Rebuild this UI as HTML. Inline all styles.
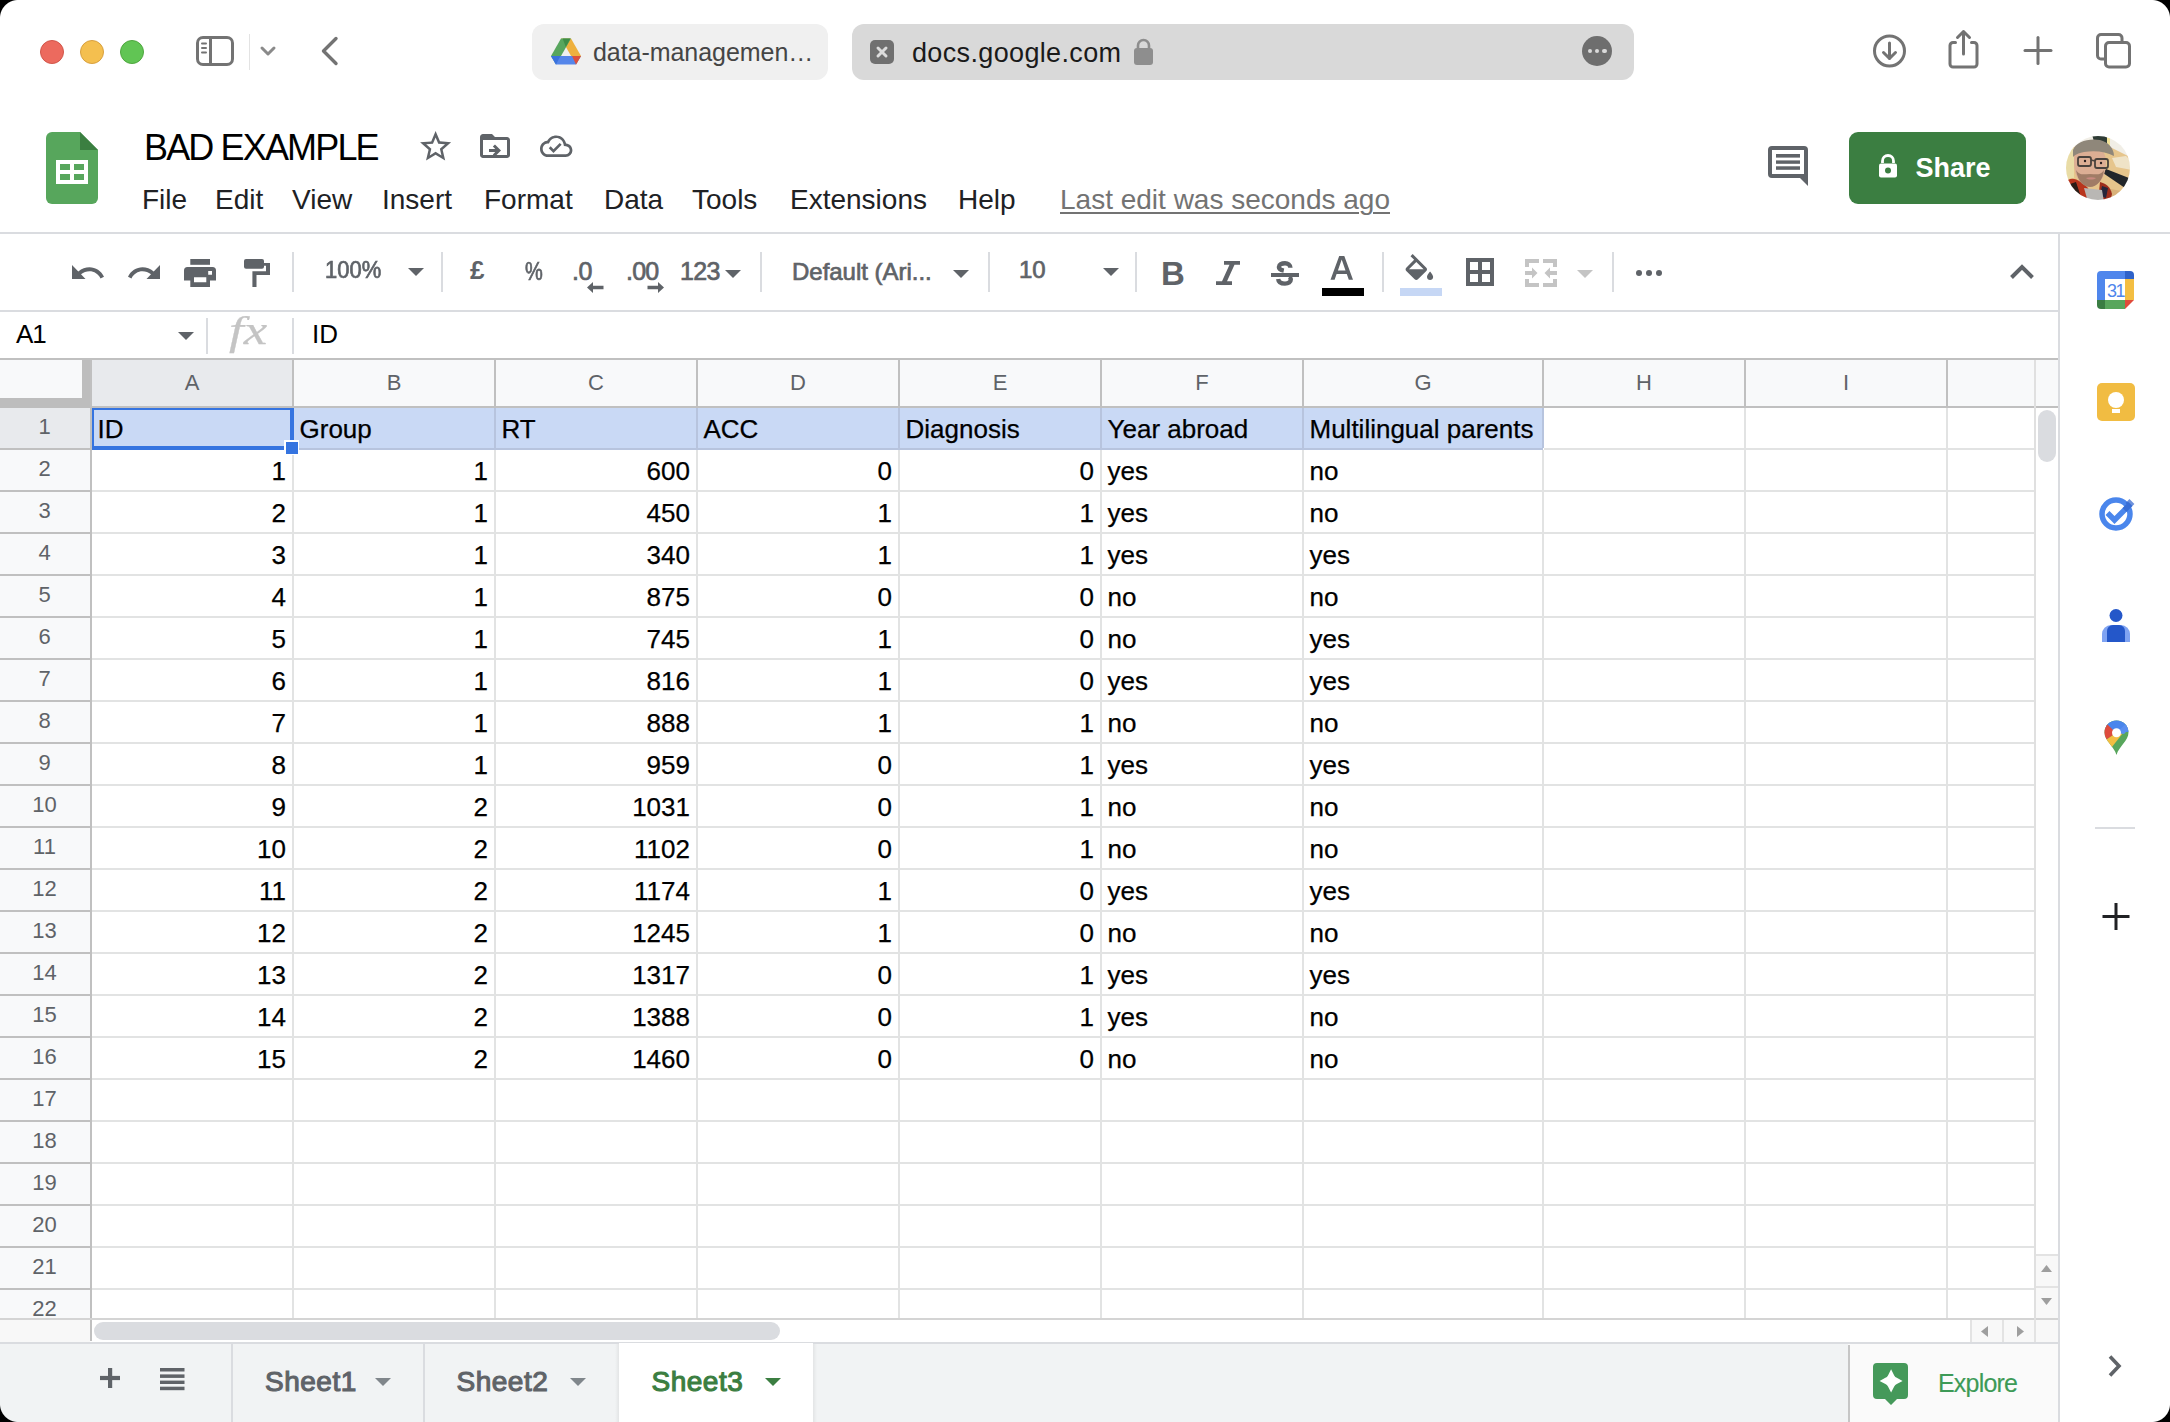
<!DOCTYPE html>
<html><head><meta charset="utf-8"><style>
html,body{margin:0;padding:0;}
body{width:2170px;height:1422px;overflow:hidden;position:relative;background:#fff;font-family:"Liberation Sans", sans-serif;}
</style></head><body>
<div style="position:absolute;left:40px;top:40px;width:24px;height:24px;border-radius:50%;background:#ec6a5e;box-sizing:border-box;border:1px solid #d1564a;"></div><div style="position:absolute;left:80px;top:40px;width:24px;height:24px;border-radius:50%;background:#f4bf4f;box-sizing:border-box;border:1px solid #d8a03f;"></div><div style="position:absolute;left:120px;top:40px;width:24px;height:24px;border-radius:50%;background:#61c554;box-sizing:border-box;border:1px solid #4fa73f;"></div><svg style="position:absolute;left:190px;top:30px;" width="50" height="42" viewBox="0 0 50 42"><rect x="7.5" y="7.5" width="35" height="27" rx="5.5" fill="none" stroke="#737373" stroke-width="3"/><line x1="20.5" y1="8" x2="20.5" y2="34" stroke="#737373" stroke-width="3"/><g stroke="#737373" stroke-width="2" stroke-linecap="round"><line x1="12" y1="13.5" x2="16" y2="13.5"/><line x1="12" y1="18" x2="16" y2="18"/><line x1="12" y1="22.5" x2="16" y2="22.5"/></g></svg><div style="position:absolute;left:249px;top:34px;width:1px;height:36px;background:#e3e3e3"></div><svg style="position:absolute;left:256px;top:40px;" width="24" height="20" viewBox="0 0 24 20"><polyline points="6,8 12,14 18,8" fill="none" stroke="#8a8a8a" stroke-width="3" stroke-linecap="round" stroke-linejoin="round"/></svg><svg style="position:absolute;left:314px;top:32px;" width="30" height="38" viewBox="0 0 30 38"><polyline points="22,6.5 9.5,19 22,31.5" fill="none" stroke="#737373" stroke-width="3.4" stroke-linecap="round" stroke-linejoin="round"/></svg><div style="position:absolute;left:532px;top:24px;width:296px;height:56px;background:#f0f0f0;border-radius:12px"></div><svg style="position:absolute;left:551px;top:38px;" width="30" height="27" viewBox="0 0 30 27">
<path d="M10 0.6 L20 0.6 L30 18 L25 26.6 Z" fill="#eeb03e"/>
<path d="M10 0.6 L20 0.6 L10 18 L5 26.6 L0 18 Z" fill="#58a65e"/>
<path d="M0 18 L30 18 L25 26.6 L5 26.6 Z" fill="#5586ea"/>
<path d="M11.6 0.6 L19.4 0.6 L14.8 9 Z" fill="#3e8d47"/>
<path d="M30 18 L25 26.6 L21 18 Z" fill="#de4f3a"/>
<path d="M0 18 L5 26.6 L9.5 18 Z" fill="#3a72de"/>
</svg><div style="position:absolute;left:593px;top:37.96px;font-size:25px;line-height:28.75px;color:#454545;font-weight:400;white-space:nowrap;letter-spacing:-0.05px">data-managemen&#8230;</div><div style="position:absolute;left:852px;top:24px;width:782px;height:56px;background:#d9d9d9;border-radius:12px"></div><div style="position:absolute;left:870px;top:40px;width:24px;height:24px;background:#707070;border-radius:5px"></div><svg style="position:absolute;left:870px;top:40px;" width="24" height="24" viewBox="0 0 24 24"><g stroke="#dcdcdc" stroke-width="3" stroke-linecap="round"><line x1="8" y1="8" x2="16" y2="16"/><line x1="16" y1="8" x2="8" y2="16"/></g></svg><div style="position:absolute;left:912px;top:37.55px;font-size:27px;line-height:31.05px;color:#1a1a1a;font-weight:400;white-space:nowrap;letter-spacing:0.35px">docs.google.com</div><svg style="position:absolute;left:1133px;top:37px;" width="21" height="29" viewBox="0 0 21 29"><path d="M5 12 V8.5 A5.5 5.5 0 0 1 16 8.5 V12" fill="none" stroke="#8e8e8e" stroke-width="2.6"/><rect x="1" y="11" width="19" height="17" rx="3" fill="#8e8e8e"/></svg><div style="position:absolute;left:1582px;top:36px;width:30px;height:30px;border-radius:50%;background:#6e6e6e"></div><div style="position:absolute;left:1587.7px;top:48.5px;width:4.6px;height:4.6px;border-radius:50%;background:#dadada"></div><div style="position:absolute;left:1594.7px;top:48.5px;width:4.6px;height:4.6px;border-radius:50%;background:#dadada"></div><div style="position:absolute;left:1602.2px;top:48.5px;width:4.6px;height:4.6px;border-radius:50%;background:#dadada"></div><svg style="position:absolute;left:1870px;top:32px;" width="40" height="40" viewBox="0 0 40 40"><circle cx="19.5" cy="19" r="15" fill="none" stroke="#737373" stroke-width="3"/><line x1="19.5" y1="11" x2="19.5" y2="26" stroke="#737373" stroke-width="3" stroke-linecap="round"/><polyline points="13.5,20.5 19.5,26.5 25.5,20.5" fill="none" stroke="#737373" stroke-width="3" stroke-linecap="round" stroke-linejoin="round"/></svg><svg style="position:absolute;left:1945px;top:26px;" width="40" height="46" viewBox="0 0 40 46"><path d="M10.5 16.5 H8 a3 3 0 0 0 -3 3 V38 a3 3 0 0 0 3 3 H29 a3 3 0 0 0 3 -3 V19.5 a3 3 0 0 0 -3 -3 H26.5" fill="none" stroke="#737373" stroke-width="3" stroke-linecap="round"/><line x1="18.5" y1="6" x2="18.5" y2="28" stroke="#737373" stroke-width="3" stroke-linecap="round"/><polyline points="12.5,11.5 18.5,5.5 24.5,11.5" fill="none" stroke="#737373" stroke-width="3" stroke-linecap="round" stroke-linejoin="round"/></svg><svg style="position:absolute;left:2020px;top:33px;" width="36" height="36" viewBox="0 0 36 36"><g stroke="#737373" stroke-width="3" stroke-linecap="round"><line x1="18" y1="4.5" x2="18" y2="30.5"/><line x1="5" y1="17.5" x2="31" y2="17.5"/></g></svg><svg style="position:absolute;left:2090px;top:28px;" width="46" height="46" viewBox="0 0 46 46"><path d="M15.5 31 H11 a3.5 3.5 0 0 1 -3.5 -3.5 V10 a3.5 3.5 0 0 1 3.5 -3.5 H28.5 a3.5 3.5 0 0 1 3.5 3.5 V14.5" fill="none" stroke="#737373" stroke-width="3"/><rect x="15.5" y="14.5" width="24" height="24.5" rx="3.5" fill="none" stroke="#737373" stroke-width="3"/></svg><svg style="position:absolute;left:46px;top:132px;" width="52" height="72" viewBox="0 0 52 72">
<path d="M6 0 H34 L52 18 V66 a6 6 0 0 1 -6 6 H6 a6 6 0 0 1 -6 -6 V6 a6 6 0 0 1 6 -6 Z" fill="#57a65c"/>
<path d="M34 0 L52 18 H34 Z" fill="#3b7f41"/>
<rect x="10" y="28" width="32" height="24" fill="#fff"/>
<rect x="14" y="32" width="10" height="6" fill="#57a65c"/>
<rect x="28" y="32" width="10" height="6" fill="#57a65c"/>
<rect x="14" y="42" width="10" height="6" fill="#57a65c"/>
<rect x="28" y="42" width="10" height="6" fill="#57a65c"/>
</svg><div style="position:absolute;left:144px;top:126.90px;font-size:36px;line-height:41.40px;color:#000;font-weight:400;white-space:nowrap;letter-spacing:-1.85px">BAD EXAMPLE</div><svg style="position:absolute;left:417px;top:127.7px;" width="38" height="38" viewBox="0 0 38 38"><g transform="scale(1.55)"><path fill="#5f6368" d="M22 9.24l-7.19-.62L12 2 9.19 8.63 2 9.24l5.46 4.73L5.82 21 12 17.27 18.18 21l-1.63-7.03L22 9.24zM12 15.4l-3.76 2.27 1-4.28-3.32-2.88 4.38-.38L12 6.1l1.71 4.04 4.38.38-3.32 2.88 1 4.28L12 15.4z"/></g></svg><svg style="position:absolute;left:477px;top:128px;" width="36" height="36" viewBox="0 0 36 36"><g transform="scale(1.5)"><path fill="#5f6368" d="M20 6h-8l-2-2H4c-1.1 0-1.99.9-1.99 2L2 18c0 1.1.9 2 2 2h16c1.1 0 2-.9 2-2V8c0-1.1-.9-2-2-2zm0 12H4V8h16v10zm-7.84-4H8v2h4.16l-1.59 1.59L11.99 19 16 15.01 11.99 11l-1.41 1.41L12.16 14z"/></g></svg><svg style="position:absolute;left:540px;top:129.9px;" width="34" height="30" viewBox="0 0 34 30"><g transform="scale(1.35)"><path fill="#5f6368" d="M19.35 10.04C18.67 6.59 15.64 4 12 4 9.11 4 6.6 5.64 5.35 8.04 2.34 8.36 0 10.91 0 14c0 3.31 2.69 6 6 6h13c2.76 0 5-2.24 5-5 0-2.64-2.05-4.78-4.65-4.96zM19 18H6c-2.21 0-4-1.79-4-4 0-2.05 1.53-3.76 3.56-3.97l1.07-.11.5-.95C8.08 7.14 9.94 6 12 6c2.62 0 4.88 1.86 5.39 4.43l.3 1.5 1.53.11c1.56.1 2.78 1.41 2.78 2.96 0 1.65-1.35 3-3 3zm-9-3.82l-2.09-2.09L6.5 13.5 10 17l6.01-6.01-1.41-1.41z"/></g></svg><div style="position:absolute;left:142px;top:184.45px;font-size:28px;line-height:32.20px;color:#202124;font-weight:400;white-space:nowrap;">File</div><div style="position:absolute;left:215px;top:184.45px;font-size:28px;line-height:32.20px;color:#202124;font-weight:400;white-space:nowrap;">Edit</div><div style="position:absolute;left:292px;top:184.45px;font-size:28px;line-height:32.20px;color:#202124;font-weight:400;white-space:nowrap;">View</div><div style="position:absolute;left:382px;top:184.45px;font-size:28px;line-height:32.20px;color:#202124;font-weight:400;white-space:nowrap;">Insert</div><div style="position:absolute;left:484px;top:184.45px;font-size:28px;line-height:32.20px;color:#202124;font-weight:400;white-space:nowrap;">Format</div><div style="position:absolute;left:604px;top:184.45px;font-size:28px;line-height:32.20px;color:#202124;font-weight:400;white-space:nowrap;">Data</div><div style="position:absolute;left:692px;top:184.45px;font-size:28px;line-height:32.20px;color:#202124;font-weight:400;white-space:nowrap;">Tools</div><div style="position:absolute;left:790px;top:184.45px;font-size:28px;line-height:32.20px;color:#202124;font-weight:400;white-space:nowrap;">Extensions</div><div style="position:absolute;left:958px;top:184.45px;font-size:28px;line-height:32.20px;color:#202124;font-weight:400;white-space:nowrap;">Help</div><div style="position:absolute;left:1060px;top:184.45px;font-size:28px;line-height:32.20px;color:#737373;font-weight:400;white-space:nowrap;text-decoration:underline;text-decoration-thickness:2px;text-underline-offset:3px">Last edit was seconds ago</div><svg style="position:absolute;left:1764px;top:140px;" width="48" height="50" viewBox="0 0 48 50"><path d="M8 6 H40 a4 4 0 0 1 4 4 V46 L36 38 H8 a4 4 0 0 1 -4 -4 V10 a4 4 0 0 1 4 -4 Z M8 10 V34 H40 V10 Z" fill="#5f6368" fill-rule="evenodd"/><rect x="12" y="14" width="24" height="3.6" fill="#5f6368"/><rect x="12" y="20.4" width="24" height="3.4" fill="#5f6368"/><rect x="12" y="26.3" width="24" height="3.5" fill="#5f6368"/></svg><div style="position:absolute;left:1849px;top:132px;width:177px;height:72px;background:#3b7e41;border-radius:9px"></div><svg style="position:absolute;left:1876px;top:154px;" width="24" height="26" viewBox="0 0 24 26"><path d="M6.5 9 V7 a5.5 5.5 0 0 1 11 0 V9" fill="none" stroke="#fff" stroke-width="2.8"/><rect x="3" y="9.5" width="18" height="14" rx="2" fill="#fff"/><circle cx="12" cy="16.5" r="3" fill="#3b7e41"/></svg><div style="position:absolute;left:1915.5px;top:152.55px;font-size:27px;line-height:31.05px;color:#fff;font-weight:700;white-space:nowrap;">Share</div><svg style="position:absolute;left:2066px;top:136px;" width="64" height="64" viewBox="0 0 64 64">
<defs><clipPath id="av"><circle cx="32" cy="32" r="32"/></clipPath><filter id="avb" x="-10%" y="-10%" width="120%" height="120%"><feGaussianBlur stdDeviation="0.7"/></filter></defs>
<g clip-path="url(#av)"><g filter="url(#avb)">
<rect x="-2" y="-2" width="68" height="68" fill="#e6c58c"/>
<path d="M-2 -2 H66 V22 L30 4 L-2 14 Z" fill="#f1eee6"/>
<path d="M26 -2 H42 V9 L28 6 Z" fill="#2e3a34"/>
<path d="M41 -2 L44 -2 L44 10 L41 9 Z" fill="#f3e39a"/>
<path d="M46 22 L60 20 L66 26 V34 L50 31 Z" fill="#efe3c7"/>
<path d="M-2 14 L8 12 L8 42 L-2 44 Z" fill="#e9dca6"/>
<path d="M37 37 L40 33 L63 42 L59 52 Z" fill="#24262a"/>
<path d="M40 52 L60 56 L50 66 L40 66 Z" fill="#d9b27a"/>
<path d="M2 44 C8 40 16 46 22 52 L28 66 H-2 V50 Z" fill="#b8361f"/>
<path d="M4 48 L10 46 L14 58 L8 62 Z" fill="#2a1a18"/>
<path d="M34 46 C40 48 44 50 46 58 L44 66 H32 Z" fill="#9e2f1e"/>
<path d="M36 50 L42 52 L40 62 L34 60 Z" fill="#25253a"/>
<path d="M18 52 L36 54 L38 66 H22 Z" fill="#b9b7b4"/>
<path d="M8 22 C8 14 14 10 24 10 C34 10 40 16 40 26 C40 40 34 50 24 50 C14 50 8 40 8 26 Z" fill="#dcae94"/>
<path d="M10 34 C12 46 18 51 24 51 C31 51 37 44 38 34 C34 40 30 38 24 38 C18 38 14 40 10 34 Z" fill="#a07c66"/>
<path d="M20 42 C23 41 27 41 30 42 C28 44 22 44 20 42 Z" fill="#c98a80"/>
<path d="M7 14 C10 6 22 2 34 4 C42 6 48 12 48 20 C40 16 30 14 18 16 C12 17 9 19 7 21 Z" fill="#8f877a"/>
<g fill="none" stroke="#4a433c" stroke-width="1.8"><rect x="12" y="21" width="13" height="9" rx="2"/><rect x="29" y="23" width="13" height="9" rx="2"/><path d="M25 24 L29 25"/></g>
<circle cx="19" cy="25" r="1.2" fill="#2a2020"/><circle cx="35" cy="27" r="1.2" fill="#2a2020"/>
</g></g></svg><div style="position:absolute;left:0px;top:232px;width:2170px;height:2px;background:#dadce0"></div><svg style="position:absolute;left:66px;top:252px;" width="44" height="40" viewBox="0 0 44 40"><path d="M6 13 L6 27 L19.5 27 L15 22.3 C17.6 20.2 20.3 19.3 23.5 19.3 C28 19.3 32.5 22 34.5 26.5 L38 24.7 C35.5 19 29.5 15.2 23.5 15.2 C19.5 15.2 15.8 16.6 12.3 19.4 Z" fill="#5f6368"/></svg><svg style="position:absolute;left:122px;top:252px;" width="44" height="40" viewBox="0 0 44 40"><g transform="translate(44,0) scale(-1,1)"><path d="M6 13 L6 27 L19.5 27 L15 22.3 C17.6 20.2 20.3 19.3 23.5 19.3 C28 19.3 32.5 22 34.5 26.5 L38 24.7 C35.5 19 29.5 15.2 23.5 15.2 C19.5 15.2 15.8 16.6 12.3 19.4 Z" fill="#5f6368"/></g></svg><svg style="position:absolute;left:184px;top:259px;" width="32" height="28" viewBox="0 0 32 28"><rect x="6.3" y="0" width="19.7" height="5.8" fill="#5f6368"/><path d="M3.5 8 H28.5 a3.5 3.5 0 0 1 3.5 3.5 V21.6 H26 V28 H6.3 V21.6 H0 V11.5 A3.5 3.5 0 0 1 3.5 8 Z M10 18.2 V23.3 H22.3 V18.2 Z M24.2 12 V15.8 H28 V12 Z" fill="#5f6368" fill-rule="evenodd"/></svg><svg style="position:absolute;left:244px;top:259px;" width="27" height="28" viewBox="0 0 27 28"><rect x="0" y="0" width="20" height="9.8" rx="2" fill="#5f6368"/><path d="M20 4 H26 V16 H12.5 V28 H8.4 V12.2 H22 V6.8 H20 Z" fill="#5f6368"/></svg><div style="position:absolute;left:292px;top:252px;width:2px;height:40px;background:#dadce0"></div><div style="position:absolute;left:325px;top:256.27px;font-size:24px;line-height:27.60px;color:#5f6368;font-weight:400;white-space:nowrap;-webkit-text-stroke:0.7px #5f6368;transform:scaleX(0.915);transform-origin:0 0">100%</div><svg style="position:absolute;left:408px;top:268px;" width="16" height="8" viewBox="0 0 16 8"><polygon points="0,0 16,0 8.0,8" fill="#5f6368"/></svg><div style="position:absolute;left:441px;top:252px;width:2px;height:40px;background:#dadce0"></div><div style="position:absolute;left:470px;top:256.16px;font-size:26px;line-height:29.90px;color:#5f6368;font-weight:700;white-space:nowrap;">£</div><div style="position:absolute;left:524.5px;top:257.06px;font-size:25px;line-height:28.75px;color:#5f6368;font-weight:400;white-space:nowrap;-webkit-text-stroke:0.7px #5f6368;transform:scaleX(0.8);transform-origin:0 0">%</div><div style="position:absolute;left:572px;top:257.06px;font-size:25px;line-height:28.75px;color:#5f6368;font-weight:400;white-space:nowrap;-webkit-text-stroke:0.7px #5f6368;letter-spacing:-0.5px">.0</div><svg style="position:absolute;left:587px;top:282px;" width="18" height="12" viewBox="0 0 18 12"><path d="M0 5.5 L6 0 V3.7 H16.5 V7.3 H6 V11 Z" fill="#5f6368"/></svg><div style="position:absolute;left:626px;top:257.06px;font-size:25px;line-height:28.75px;color:#5f6368;font-weight:400;white-space:nowrap;-webkit-text-stroke:0.7px #5f6368;letter-spacing:-0.8px">.00</div><svg style="position:absolute;left:647px;top:282px;" width="18" height="12" viewBox="0 0 18 12"><path d="M17 5.5 L11 0 V3.7 H0.5 V7.3 H11 V11 Z" fill="#5f6368"/></svg><div style="position:absolute;left:680px;top:257.36px;font-size:25px;line-height:28.75px;color:#5f6368;font-weight:400;white-space:nowrap;-webkit-text-stroke:0.7px #5f6368;letter-spacing:-0.6px">123</div><svg style="position:absolute;left:725px;top:270px;" width="16" height="8" viewBox="0 0 16 8"><polygon points="0,0 16,0 8.0,8" fill="#5f6368"/></svg><div style="position:absolute;left:760px;top:252px;width:2px;height:40px;background:#dadce0"></div><div style="position:absolute;left:792px;top:258.27px;font-size:24px;line-height:27.60px;color:#5f6368;font-weight:400;white-space:nowrap;-webkit-text-stroke:0.7px #5f6368;letter-spacing:-0.02px">Default (Ari...</div><svg style="position:absolute;left:953px;top:270px;" width="16" height="8" viewBox="0 0 16 8"><polygon points="0,0 16,0 8.0,8" fill="#5f6368"/></svg><div style="position:absolute;left:988px;top:252px;width:2px;height:40px;background:#dadce0"></div><div style="position:absolute;left:1019px;top:255.87px;font-size:24px;line-height:27.60px;color:#5f6368;font-weight:400;white-space:nowrap;-webkit-text-stroke:0.7px #5f6368">10</div><svg style="position:absolute;left:1103px;top:268px;" width="16" height="8" viewBox="0 0 16 8"><polygon points="0,0 16,0 8.0,8" fill="#5f6368"/></svg><div style="position:absolute;left:1135px;top:252px;width:2px;height:40px;background:#dadce0"></div><div style="position:absolute;left:1161px;top:255.12px;font-size:33px;line-height:37.95px;color:#5f6368;font-weight:700;white-space:nowrap;">B</div><svg style="position:absolute;left:1216px;top:261px;" width="26" height="24" viewBox="0 0 26 24"><path d="M8 0 H24 V3.8 H18.5 L11 20.2 H16 V24 H0 V20.2 H6 L13.5 3.8 H8 Z" fill="#5f6368"/></svg><svg style="position:absolute;left:1270px;top:258px;" width="30" height="30" viewBox="0 0 30 30"><g fill="none" stroke="#5f6368" stroke-width="4.4"><path d="M20.4 9.8 C20.3 6.8 18 5.2 15 5.2 C11.6 5.2 8.9 6.6 8.9 9 C8.9 11 10.6 12 13.8 12.6"/><path d="M8.2 21 C8.5 24.2 11.3 25.6 15 25.6 C18.6 25.6 20.8 24 20.8 21.6 C20.8 20.5 20.2 19.6 19 19"/></g><rect x="1" y="15" width="28" height="4" fill="#5f6368"/></svg><svg style="position:absolute;left:1330px;top:255px;" width="24" height="26" viewBox="0 0 24 26"><path d="M9.2 1 H14.3 L23 24.8 H18.8 L16.8 19 H6.6 L4.6 24.8 H0.5 Z M7.9 15.4 H15.5 L11.7 4.6 Z" fill="#5f6368"/></svg><div style="position:absolute;left:1322px;top:288px;width:42px;height:8px;background:#000"></div><div style="position:absolute;left:1382px;top:252px;width:2px;height:40px;background:#dadce0"></div><svg style="position:absolute;left:1401px;top:254px;" width="36" height="28" viewBox="0 0 36 28"><g transform="scale(1.53)"><path fill="#5f6368" d="M16.56 8.94L7.62 0 6.21 1.41l2.38 2.38-5.15 5.15c-.59.59-.59 1.54 0 2.12l5.5 5.5c.29.29.68.44 1.06.44s.77-.15 1.06-.44l5.5-5.5c.59-.58.59-1.530 0-2.12zM5.21 10L10 5.21 14.79 10H5.21zM19 11.5s-2 2.17-2 3.5c0 1.1.9 2 2 2s2-.9 2-2c0-1.330-2-3.5-2-3.5z"/></g></svg><div style="position:absolute;left:1400px;top:288px;width:42px;height:8px;background:#c6d7f5"></div><svg style="position:absolute;left:1466px;top:258px;" width="28" height="28" viewBox="0 0 28 28"><path d="M0 0 H28 V28 H0 Z M4 4 V12 H12 V4 Z M16 4 V12 H24 V4 Z M4 16 V24 H12 V16 Z M16 16 V24 H24 V16 Z" fill="#5f6368" fill-rule="evenodd"/></svg><svg style="position:absolute;left:1525px;top:259px;" width="32" height="28" viewBox="0 0 32 28"><path d="M0 0 H14 V4 H4 V8 H0 Z M18 0 H32 V8 H28 V4 H18 Z M0 20 H4 V24 H14 V28 H0 Z M28 20 H32 V28 H18 V24 H28 Z" fill="#c4c4c4"/><path d="M0 12 H7 V8.5 L12.5 14 L7 19.5 V16 H0 Z" fill="#c4c4c4"/><path d="M32 12 H25 V8.5 L19.5 14 L25 19.5 V16 H32 Z" fill="#c4c4c4"/></svg><svg style="position:absolute;left:1577px;top:270px;" width="16" height="8" viewBox="0 0 16 8"><polygon points="0,0 16,0 8.0,8" fill="#c4c4c4"/></svg><div style="position:absolute;left:1612px;top:252px;width:2px;height:40px;background:#dadce0"></div><div style="position:absolute;left:1636px;top:270px;width:6px;height:6px;border-radius:50%;background:#5f6368"></div><div style="position:absolute;left:1646px;top:270px;width:6px;height:6px;border-radius:50%;background:#5f6368"></div><div style="position:absolute;left:1656px;top:270px;width:6px;height:6px;border-radius:50%;background:#5f6368"></div><svg style="position:absolute;left:2006px;top:260px;" width="32" height="24" viewBox="0 0 32 24"><polyline points="5.5,17.5 16,7 26.5,17.5" fill="none" stroke="#5f6368" stroke-width="4"/></svg><div style="position:absolute;left:0px;top:310px;width:2058px;height:2px;background:#dadce0"></div><div style="position:absolute;left:16px;top:320.46px;font-size:26px;line-height:29.90px;color:#000;font-weight:400;white-space:nowrap;letter-spacing:-1.2px">A1</div><svg style="position:absolute;left:178px;top:332px;" width="16" height="8" viewBox="0 0 16 8"><polygon points="0,0 16,0 8.0,8" fill="#5f6368"/></svg><div style="position:absolute;left:206px;top:318px;width:2px;height:36px;background:#dadce0"></div><div style="position:absolute;left:229px;top:307.78px;font-size:40px;line-height:46.00px;color:#c4c4c4;font-weight:400;white-space:nowrap;font-family:'Liberation Serif', serif;letter-spacing:0px;transform:scaleX(1.32);transform-origin:0 0;-webkit-text-stroke:0.25px #c4c4c4"><i>fx</i></div><div style="position:absolute;left:292px;top:318px;width:2px;height:36px;background:#dadce0"></div><div style="position:absolute;left:312px;top:320.46px;font-size:26px;line-height:29.90px;color:#000;font-weight:400;white-space:nowrap;">ID</div><div style="position:absolute;left:92px;top:408px;width:1942px;height:910px;background:#fff"></div><div style="position:absolute;left:92px;top:408px;width:1451px;height:40px;background:#c9d9f5"></div><div style="position:absolute;left:92px;top:448px;width:1451px;height:2px;background:#b7c4de"></div><div style="position:absolute;left:1544px;top:448px;width:490px;height:2px;background:#e2e3e3"></div><div style="position:absolute;left:92px;top:490px;width:1942px;height:2px;background:#e2e3e3"></div><div style="position:absolute;left:92px;top:532px;width:1942px;height:2px;background:#e2e3e3"></div><div style="position:absolute;left:92px;top:574px;width:1942px;height:2px;background:#e2e3e3"></div><div style="position:absolute;left:92px;top:616px;width:1942px;height:2px;background:#e2e3e3"></div><div style="position:absolute;left:92px;top:658px;width:1942px;height:2px;background:#e2e3e3"></div><div style="position:absolute;left:92px;top:700px;width:1942px;height:2px;background:#e2e3e3"></div><div style="position:absolute;left:92px;top:742px;width:1942px;height:2px;background:#e2e3e3"></div><div style="position:absolute;left:92px;top:784px;width:1942px;height:2px;background:#e2e3e3"></div><div style="position:absolute;left:92px;top:826px;width:1942px;height:2px;background:#e2e3e3"></div><div style="position:absolute;left:92px;top:868px;width:1942px;height:2px;background:#e2e3e3"></div><div style="position:absolute;left:92px;top:910px;width:1942px;height:2px;background:#e2e3e3"></div><div style="position:absolute;left:92px;top:952px;width:1942px;height:2px;background:#e2e3e3"></div><div style="position:absolute;left:92px;top:994px;width:1942px;height:2px;background:#e2e3e3"></div><div style="position:absolute;left:92px;top:1036px;width:1942px;height:2px;background:#e2e3e3"></div><div style="position:absolute;left:92px;top:1078px;width:1942px;height:2px;background:#e2e3e3"></div><div style="position:absolute;left:92px;top:1120px;width:1942px;height:2px;background:#e2e3e3"></div><div style="position:absolute;left:92px;top:1162px;width:1942px;height:2px;background:#e2e3e3"></div><div style="position:absolute;left:92px;top:1204px;width:1942px;height:2px;background:#e2e3e3"></div><div style="position:absolute;left:92px;top:1246px;width:1942px;height:2px;background:#e2e3e3"></div><div style="position:absolute;left:92px;top:1288px;width:1942px;height:2px;background:#e2e3e3"></div><div style="position:absolute;left:292px;top:408px;width:2px;height:40px;background:#b7c4de"></div><div style="position:absolute;left:292px;top:450px;width:2px;height:868px;background:#e2e3e3"></div><div style="position:absolute;left:494px;top:408px;width:2px;height:40px;background:#b7c4de"></div><div style="position:absolute;left:494px;top:450px;width:2px;height:868px;background:#e2e3e3"></div><div style="position:absolute;left:696px;top:408px;width:2px;height:40px;background:#b7c4de"></div><div style="position:absolute;left:696px;top:450px;width:2px;height:868px;background:#e2e3e3"></div><div style="position:absolute;left:898px;top:408px;width:2px;height:40px;background:#b7c4de"></div><div style="position:absolute;left:898px;top:450px;width:2px;height:868px;background:#e2e3e3"></div><div style="position:absolute;left:1100px;top:408px;width:2px;height:40px;background:#b7c4de"></div><div style="position:absolute;left:1100px;top:450px;width:2px;height:868px;background:#e2e3e3"></div><div style="position:absolute;left:1302px;top:408px;width:2px;height:40px;background:#b7c4de"></div><div style="position:absolute;left:1302px;top:450px;width:2px;height:868px;background:#e2e3e3"></div><div style="position:absolute;left:1542px;top:408px;width:2px;height:40px;background:#b7c4de"></div><div style="position:absolute;left:1542px;top:450px;width:2px;height:868px;background:#e2e3e3"></div><div style="position:absolute;left:1744px;top:408px;width:2px;height:910px;background:#e2e3e3"></div><div style="position:absolute;left:1946px;top:408px;width:2px;height:910px;background:#e2e3e3"></div><div style="position:absolute;left:2034px;top:408px;width:2px;height:910px;background:#e2e3e3"></div><div style="position:absolute;left:0px;top:358px;width:2058px;height:2px;background:#c0c0c0"></div><div style="position:absolute;left:0px;top:360px;width:2058px;height:46px;background:#f8f9fa"></div><div style="position:absolute;left:92px;top:360px;width:200px;height:46px;background:#e8eaed"></div><div style="position:absolute;left:0px;top:406px;width:2058px;height:2px;background:#c0c0c0"></div><div style="position:absolute;left:292px;top:360px;width:2px;height:46px;background:#c0c0c0"></div><div style="position:absolute;left:494px;top:360px;width:2px;height:46px;background:#c0c0c0"></div><div style="position:absolute;left:696px;top:360px;width:2px;height:46px;background:#c0c0c0"></div><div style="position:absolute;left:898px;top:360px;width:2px;height:46px;background:#c0c0c0"></div><div style="position:absolute;left:1100px;top:360px;width:2px;height:46px;background:#c0c0c0"></div><div style="position:absolute;left:1302px;top:360px;width:2px;height:46px;background:#c0c0c0"></div><div style="position:absolute;left:1542px;top:360px;width:2px;height:46px;background:#c0c0c0"></div><div style="position:absolute;left:1744px;top:360px;width:2px;height:46px;background:#c0c0c0"></div><div style="position:absolute;left:1946px;top:360px;width:2px;height:46px;background:#c0c0c0"></div><div style="position:absolute;left:2034px;top:360px;width:2px;height:46px;background:#c0c0c0"></div><div style="position:absolute;left:92px;top:360px;width:200px;height:46px;line-height:45.5px;text-align:center;font-size:22px;color:#5f6368">A</div><div style="position:absolute;left:294px;top:360px;width:200px;height:46px;line-height:45.5px;text-align:center;font-size:22px;color:#5f6368">B</div><div style="position:absolute;left:496px;top:360px;width:200px;height:46px;line-height:45.5px;text-align:center;font-size:22px;color:#5f6368">C</div><div style="position:absolute;left:698px;top:360px;width:200px;height:46px;line-height:45.5px;text-align:center;font-size:22px;color:#5f6368">D</div><div style="position:absolute;left:900px;top:360px;width:200px;height:46px;line-height:45.5px;text-align:center;font-size:22px;color:#5f6368">E</div><div style="position:absolute;left:1102px;top:360px;width:200px;height:46px;line-height:45.5px;text-align:center;font-size:22px;color:#5f6368">F</div><div style="position:absolute;left:1304px;top:360px;width:238px;height:46px;line-height:45.5px;text-align:center;font-size:22px;color:#5f6368">G</div><div style="position:absolute;left:1544px;top:360px;width:200px;height:46px;line-height:45.5px;text-align:center;font-size:22px;color:#5f6368">H</div><div style="position:absolute;left:1746px;top:360px;width:200px;height:46px;line-height:45.5px;text-align:center;font-size:22px;color:#5f6368">I</div><div style="position:absolute;left:82px;top:360px;width:10px;height:48px;background:#bdbdbd"></div><div style="position:absolute;left:0px;top:398px;width:92px;height:10px;background:#bdbdbd"></div><div style="position:absolute;left:0px;top:408px;width:90px;height:910px;background:#f8f9fa"></div><div style="position:absolute;left:0px;top:408px;width:90px;height:40px;background:#e8eaed"></div><div style="position:absolute;left:90px;top:360px;width:2px;height:981px;background:#c0c0c0"></div><div style="position:absolute;left:0px;top:448px;width:90px;height:2px;background:#c0c0c0"></div><div style="position:absolute;left:0;top:408px;width:90px;height:40px;overflow:hidden;"><div style="line-height:38px;text-align:center;font-size:22px;color:#5f6368;padding-right:1px">1</div></div><div style="position:absolute;left:0px;top:490px;width:90px;height:2px;background:#c0c0c0"></div><div style="position:absolute;left:0;top:450px;width:90px;height:40px;overflow:hidden;"><div style="line-height:38px;text-align:center;font-size:22px;color:#5f6368;padding-right:1px">2</div></div><div style="position:absolute;left:0px;top:532px;width:90px;height:2px;background:#c0c0c0"></div><div style="position:absolute;left:0;top:492px;width:90px;height:40px;overflow:hidden;"><div style="line-height:38px;text-align:center;font-size:22px;color:#5f6368;padding-right:1px">3</div></div><div style="position:absolute;left:0px;top:574px;width:90px;height:2px;background:#c0c0c0"></div><div style="position:absolute;left:0;top:534px;width:90px;height:40px;overflow:hidden;"><div style="line-height:38px;text-align:center;font-size:22px;color:#5f6368;padding-right:1px">4</div></div><div style="position:absolute;left:0px;top:616px;width:90px;height:2px;background:#c0c0c0"></div><div style="position:absolute;left:0;top:576px;width:90px;height:40px;overflow:hidden;"><div style="line-height:38px;text-align:center;font-size:22px;color:#5f6368;padding-right:1px">5</div></div><div style="position:absolute;left:0px;top:658px;width:90px;height:2px;background:#c0c0c0"></div><div style="position:absolute;left:0;top:618px;width:90px;height:40px;overflow:hidden;"><div style="line-height:38px;text-align:center;font-size:22px;color:#5f6368;padding-right:1px">6</div></div><div style="position:absolute;left:0px;top:700px;width:90px;height:2px;background:#c0c0c0"></div><div style="position:absolute;left:0;top:660px;width:90px;height:40px;overflow:hidden;"><div style="line-height:38px;text-align:center;font-size:22px;color:#5f6368;padding-right:1px">7</div></div><div style="position:absolute;left:0px;top:742px;width:90px;height:2px;background:#c0c0c0"></div><div style="position:absolute;left:0;top:702px;width:90px;height:40px;overflow:hidden;"><div style="line-height:38px;text-align:center;font-size:22px;color:#5f6368;padding-right:1px">8</div></div><div style="position:absolute;left:0px;top:784px;width:90px;height:2px;background:#c0c0c0"></div><div style="position:absolute;left:0;top:744px;width:90px;height:40px;overflow:hidden;"><div style="line-height:38px;text-align:center;font-size:22px;color:#5f6368;padding-right:1px">9</div></div><div style="position:absolute;left:0px;top:826px;width:90px;height:2px;background:#c0c0c0"></div><div style="position:absolute;left:0;top:786px;width:90px;height:40px;overflow:hidden;"><div style="line-height:38px;text-align:center;font-size:22px;color:#5f6368;padding-right:1px">10</div></div><div style="position:absolute;left:0px;top:868px;width:90px;height:2px;background:#c0c0c0"></div><div style="position:absolute;left:0;top:828px;width:90px;height:40px;overflow:hidden;"><div style="line-height:38px;text-align:center;font-size:22px;color:#5f6368;padding-right:1px">11</div></div><div style="position:absolute;left:0px;top:910px;width:90px;height:2px;background:#c0c0c0"></div><div style="position:absolute;left:0;top:870px;width:90px;height:40px;overflow:hidden;"><div style="line-height:38px;text-align:center;font-size:22px;color:#5f6368;padding-right:1px">12</div></div><div style="position:absolute;left:0px;top:952px;width:90px;height:2px;background:#c0c0c0"></div><div style="position:absolute;left:0;top:912px;width:90px;height:40px;overflow:hidden;"><div style="line-height:38px;text-align:center;font-size:22px;color:#5f6368;padding-right:1px">13</div></div><div style="position:absolute;left:0px;top:994px;width:90px;height:2px;background:#c0c0c0"></div><div style="position:absolute;left:0;top:954px;width:90px;height:40px;overflow:hidden;"><div style="line-height:38px;text-align:center;font-size:22px;color:#5f6368;padding-right:1px">14</div></div><div style="position:absolute;left:0px;top:1036px;width:90px;height:2px;background:#c0c0c0"></div><div style="position:absolute;left:0;top:996px;width:90px;height:40px;overflow:hidden;"><div style="line-height:38px;text-align:center;font-size:22px;color:#5f6368;padding-right:1px">15</div></div><div style="position:absolute;left:0px;top:1078px;width:90px;height:2px;background:#c0c0c0"></div><div style="position:absolute;left:0;top:1038px;width:90px;height:40px;overflow:hidden;"><div style="line-height:38px;text-align:center;font-size:22px;color:#5f6368;padding-right:1px">16</div></div><div style="position:absolute;left:0px;top:1120px;width:90px;height:2px;background:#c0c0c0"></div><div style="position:absolute;left:0;top:1080px;width:90px;height:40px;overflow:hidden;"><div style="line-height:38px;text-align:center;font-size:22px;color:#5f6368;padding-right:1px">17</div></div><div style="position:absolute;left:0px;top:1162px;width:90px;height:2px;background:#c0c0c0"></div><div style="position:absolute;left:0;top:1122px;width:90px;height:40px;overflow:hidden;"><div style="line-height:38px;text-align:center;font-size:22px;color:#5f6368;padding-right:1px">18</div></div><div style="position:absolute;left:0px;top:1204px;width:90px;height:2px;background:#c0c0c0"></div><div style="position:absolute;left:0;top:1164px;width:90px;height:40px;overflow:hidden;"><div style="line-height:38px;text-align:center;font-size:22px;color:#5f6368;padding-right:1px">19</div></div><div style="position:absolute;left:0px;top:1246px;width:90px;height:2px;background:#c0c0c0"></div><div style="position:absolute;left:0;top:1206px;width:90px;height:40px;overflow:hidden;"><div style="line-height:38px;text-align:center;font-size:22px;color:#5f6368;padding-right:1px">20</div></div><div style="position:absolute;left:0px;top:1288px;width:90px;height:2px;background:#c0c0c0"></div><div style="position:absolute;left:0;top:1248px;width:90px;height:40px;overflow:hidden;"><div style="line-height:38px;text-align:center;font-size:22px;color:#5f6368;padding-right:1px">21</div></div><div style="position:absolute;left:0;top:1290px;width:90px;height:28px;overflow:hidden;"><div style="line-height:38px;text-align:center;font-size:22px;color:#5f6368;padding-right:1px">22</div></div><div style="position:absolute;left:97.5px;top:408px;height:42px;line-height:43px;font-size:26px;color:#000;white-space:nowrap;-webkit-text-stroke:0.25px #000">ID</div><div style="position:absolute;left:299.5px;top:408px;height:42px;line-height:43px;font-size:26px;color:#000;white-space:nowrap;-webkit-text-stroke:0.25px #000">Group</div><div style="position:absolute;left:501.5px;top:408px;height:42px;line-height:43px;font-size:26px;color:#000;white-space:nowrap;-webkit-text-stroke:0.25px #000">RT</div><div style="position:absolute;left:703.5px;top:408px;height:42px;line-height:43px;font-size:26px;color:#000;white-space:nowrap;-webkit-text-stroke:0.25px #000">ACC</div><div style="position:absolute;left:905.5px;top:408px;height:42px;line-height:43px;font-size:26px;color:#000;white-space:nowrap;-webkit-text-stroke:0.25px #000">Diagnosis</div><div style="position:absolute;left:1107.5px;top:408px;height:42px;line-height:43px;font-size:26px;color:#000;white-space:nowrap;-webkit-text-stroke:0.25px #000">Year abroad</div><div style="position:absolute;left:1309.5px;top:408px;height:42px;line-height:43px;font-size:26px;color:#000;white-space:nowrap;-webkit-text-stroke:0.25px #000">Multilingual parents</div><div style="position:absolute;left:92px;top:450px;width:194px;height:42px;line-height:43px;font-size:26px;color:#000;text-align:right;white-space:nowrap;-webkit-text-stroke:0.25px #000">1</div><div style="position:absolute;left:294px;top:450px;width:194px;height:42px;line-height:43px;font-size:26px;color:#000;text-align:right;white-space:nowrap;-webkit-text-stroke:0.25px #000">1</div><div style="position:absolute;left:496px;top:450px;width:194px;height:42px;line-height:43px;font-size:26px;color:#000;text-align:right;white-space:nowrap;-webkit-text-stroke:0.25px #000">600</div><div style="position:absolute;left:698px;top:450px;width:194px;height:42px;line-height:43px;font-size:26px;color:#000;text-align:right;white-space:nowrap;-webkit-text-stroke:0.25px #000">0</div><div style="position:absolute;left:900px;top:450px;width:194px;height:42px;line-height:43px;font-size:26px;color:#000;text-align:right;white-space:nowrap;-webkit-text-stroke:0.25px #000">0</div><div style="position:absolute;left:1107.5px;top:450px;height:42px;line-height:43px;font-size:26px;color:#000;white-space:nowrap;-webkit-text-stroke:0.25px #000">yes</div><div style="position:absolute;left:1309.5px;top:450px;height:42px;line-height:43px;font-size:26px;color:#000;white-space:nowrap;-webkit-text-stroke:0.25px #000">no</div><div style="position:absolute;left:92px;top:492px;width:194px;height:42px;line-height:43px;font-size:26px;color:#000;text-align:right;white-space:nowrap;-webkit-text-stroke:0.25px #000">2</div><div style="position:absolute;left:294px;top:492px;width:194px;height:42px;line-height:43px;font-size:26px;color:#000;text-align:right;white-space:nowrap;-webkit-text-stroke:0.25px #000">1</div><div style="position:absolute;left:496px;top:492px;width:194px;height:42px;line-height:43px;font-size:26px;color:#000;text-align:right;white-space:nowrap;-webkit-text-stroke:0.25px #000">450</div><div style="position:absolute;left:698px;top:492px;width:194px;height:42px;line-height:43px;font-size:26px;color:#000;text-align:right;white-space:nowrap;-webkit-text-stroke:0.25px #000">1</div><div style="position:absolute;left:900px;top:492px;width:194px;height:42px;line-height:43px;font-size:26px;color:#000;text-align:right;white-space:nowrap;-webkit-text-stroke:0.25px #000">1</div><div style="position:absolute;left:1107.5px;top:492px;height:42px;line-height:43px;font-size:26px;color:#000;white-space:nowrap;-webkit-text-stroke:0.25px #000">yes</div><div style="position:absolute;left:1309.5px;top:492px;height:42px;line-height:43px;font-size:26px;color:#000;white-space:nowrap;-webkit-text-stroke:0.25px #000">no</div><div style="position:absolute;left:92px;top:534px;width:194px;height:42px;line-height:43px;font-size:26px;color:#000;text-align:right;white-space:nowrap;-webkit-text-stroke:0.25px #000">3</div><div style="position:absolute;left:294px;top:534px;width:194px;height:42px;line-height:43px;font-size:26px;color:#000;text-align:right;white-space:nowrap;-webkit-text-stroke:0.25px #000">1</div><div style="position:absolute;left:496px;top:534px;width:194px;height:42px;line-height:43px;font-size:26px;color:#000;text-align:right;white-space:nowrap;-webkit-text-stroke:0.25px #000">340</div><div style="position:absolute;left:698px;top:534px;width:194px;height:42px;line-height:43px;font-size:26px;color:#000;text-align:right;white-space:nowrap;-webkit-text-stroke:0.25px #000">1</div><div style="position:absolute;left:900px;top:534px;width:194px;height:42px;line-height:43px;font-size:26px;color:#000;text-align:right;white-space:nowrap;-webkit-text-stroke:0.25px #000">1</div><div style="position:absolute;left:1107.5px;top:534px;height:42px;line-height:43px;font-size:26px;color:#000;white-space:nowrap;-webkit-text-stroke:0.25px #000">yes</div><div style="position:absolute;left:1309.5px;top:534px;height:42px;line-height:43px;font-size:26px;color:#000;white-space:nowrap;-webkit-text-stroke:0.25px #000">yes</div><div style="position:absolute;left:92px;top:576px;width:194px;height:42px;line-height:43px;font-size:26px;color:#000;text-align:right;white-space:nowrap;-webkit-text-stroke:0.25px #000">4</div><div style="position:absolute;left:294px;top:576px;width:194px;height:42px;line-height:43px;font-size:26px;color:#000;text-align:right;white-space:nowrap;-webkit-text-stroke:0.25px #000">1</div><div style="position:absolute;left:496px;top:576px;width:194px;height:42px;line-height:43px;font-size:26px;color:#000;text-align:right;white-space:nowrap;-webkit-text-stroke:0.25px #000">875</div><div style="position:absolute;left:698px;top:576px;width:194px;height:42px;line-height:43px;font-size:26px;color:#000;text-align:right;white-space:nowrap;-webkit-text-stroke:0.25px #000">0</div><div style="position:absolute;left:900px;top:576px;width:194px;height:42px;line-height:43px;font-size:26px;color:#000;text-align:right;white-space:nowrap;-webkit-text-stroke:0.25px #000">0</div><div style="position:absolute;left:1107.5px;top:576px;height:42px;line-height:43px;font-size:26px;color:#000;white-space:nowrap;-webkit-text-stroke:0.25px #000">no</div><div style="position:absolute;left:1309.5px;top:576px;height:42px;line-height:43px;font-size:26px;color:#000;white-space:nowrap;-webkit-text-stroke:0.25px #000">no</div><div style="position:absolute;left:92px;top:618px;width:194px;height:42px;line-height:43px;font-size:26px;color:#000;text-align:right;white-space:nowrap;-webkit-text-stroke:0.25px #000">5</div><div style="position:absolute;left:294px;top:618px;width:194px;height:42px;line-height:43px;font-size:26px;color:#000;text-align:right;white-space:nowrap;-webkit-text-stroke:0.25px #000">1</div><div style="position:absolute;left:496px;top:618px;width:194px;height:42px;line-height:43px;font-size:26px;color:#000;text-align:right;white-space:nowrap;-webkit-text-stroke:0.25px #000">745</div><div style="position:absolute;left:698px;top:618px;width:194px;height:42px;line-height:43px;font-size:26px;color:#000;text-align:right;white-space:nowrap;-webkit-text-stroke:0.25px #000">1</div><div style="position:absolute;left:900px;top:618px;width:194px;height:42px;line-height:43px;font-size:26px;color:#000;text-align:right;white-space:nowrap;-webkit-text-stroke:0.25px #000">0</div><div style="position:absolute;left:1107.5px;top:618px;height:42px;line-height:43px;font-size:26px;color:#000;white-space:nowrap;-webkit-text-stroke:0.25px #000">no</div><div style="position:absolute;left:1309.5px;top:618px;height:42px;line-height:43px;font-size:26px;color:#000;white-space:nowrap;-webkit-text-stroke:0.25px #000">yes</div><div style="position:absolute;left:92px;top:660px;width:194px;height:42px;line-height:43px;font-size:26px;color:#000;text-align:right;white-space:nowrap;-webkit-text-stroke:0.25px #000">6</div><div style="position:absolute;left:294px;top:660px;width:194px;height:42px;line-height:43px;font-size:26px;color:#000;text-align:right;white-space:nowrap;-webkit-text-stroke:0.25px #000">1</div><div style="position:absolute;left:496px;top:660px;width:194px;height:42px;line-height:43px;font-size:26px;color:#000;text-align:right;white-space:nowrap;-webkit-text-stroke:0.25px #000">816</div><div style="position:absolute;left:698px;top:660px;width:194px;height:42px;line-height:43px;font-size:26px;color:#000;text-align:right;white-space:nowrap;-webkit-text-stroke:0.25px #000">1</div><div style="position:absolute;left:900px;top:660px;width:194px;height:42px;line-height:43px;font-size:26px;color:#000;text-align:right;white-space:nowrap;-webkit-text-stroke:0.25px #000">0</div><div style="position:absolute;left:1107.5px;top:660px;height:42px;line-height:43px;font-size:26px;color:#000;white-space:nowrap;-webkit-text-stroke:0.25px #000">yes</div><div style="position:absolute;left:1309.5px;top:660px;height:42px;line-height:43px;font-size:26px;color:#000;white-space:nowrap;-webkit-text-stroke:0.25px #000">yes</div><div style="position:absolute;left:92px;top:702px;width:194px;height:42px;line-height:43px;font-size:26px;color:#000;text-align:right;white-space:nowrap;-webkit-text-stroke:0.25px #000">7</div><div style="position:absolute;left:294px;top:702px;width:194px;height:42px;line-height:43px;font-size:26px;color:#000;text-align:right;white-space:nowrap;-webkit-text-stroke:0.25px #000">1</div><div style="position:absolute;left:496px;top:702px;width:194px;height:42px;line-height:43px;font-size:26px;color:#000;text-align:right;white-space:nowrap;-webkit-text-stroke:0.25px #000">888</div><div style="position:absolute;left:698px;top:702px;width:194px;height:42px;line-height:43px;font-size:26px;color:#000;text-align:right;white-space:nowrap;-webkit-text-stroke:0.25px #000">1</div><div style="position:absolute;left:900px;top:702px;width:194px;height:42px;line-height:43px;font-size:26px;color:#000;text-align:right;white-space:nowrap;-webkit-text-stroke:0.25px #000">1</div><div style="position:absolute;left:1107.5px;top:702px;height:42px;line-height:43px;font-size:26px;color:#000;white-space:nowrap;-webkit-text-stroke:0.25px #000">no</div><div style="position:absolute;left:1309.5px;top:702px;height:42px;line-height:43px;font-size:26px;color:#000;white-space:nowrap;-webkit-text-stroke:0.25px #000">no</div><div style="position:absolute;left:92px;top:744px;width:194px;height:42px;line-height:43px;font-size:26px;color:#000;text-align:right;white-space:nowrap;-webkit-text-stroke:0.25px #000">8</div><div style="position:absolute;left:294px;top:744px;width:194px;height:42px;line-height:43px;font-size:26px;color:#000;text-align:right;white-space:nowrap;-webkit-text-stroke:0.25px #000">1</div><div style="position:absolute;left:496px;top:744px;width:194px;height:42px;line-height:43px;font-size:26px;color:#000;text-align:right;white-space:nowrap;-webkit-text-stroke:0.25px #000">959</div><div style="position:absolute;left:698px;top:744px;width:194px;height:42px;line-height:43px;font-size:26px;color:#000;text-align:right;white-space:nowrap;-webkit-text-stroke:0.25px #000">0</div><div style="position:absolute;left:900px;top:744px;width:194px;height:42px;line-height:43px;font-size:26px;color:#000;text-align:right;white-space:nowrap;-webkit-text-stroke:0.25px #000">1</div><div style="position:absolute;left:1107.5px;top:744px;height:42px;line-height:43px;font-size:26px;color:#000;white-space:nowrap;-webkit-text-stroke:0.25px #000">yes</div><div style="position:absolute;left:1309.5px;top:744px;height:42px;line-height:43px;font-size:26px;color:#000;white-space:nowrap;-webkit-text-stroke:0.25px #000">yes</div><div style="position:absolute;left:92px;top:786px;width:194px;height:42px;line-height:43px;font-size:26px;color:#000;text-align:right;white-space:nowrap;-webkit-text-stroke:0.25px #000">9</div><div style="position:absolute;left:294px;top:786px;width:194px;height:42px;line-height:43px;font-size:26px;color:#000;text-align:right;white-space:nowrap;-webkit-text-stroke:0.25px #000">2</div><div style="position:absolute;left:496px;top:786px;width:194px;height:42px;line-height:43px;font-size:26px;color:#000;text-align:right;white-space:nowrap;-webkit-text-stroke:0.25px #000">1031</div><div style="position:absolute;left:698px;top:786px;width:194px;height:42px;line-height:43px;font-size:26px;color:#000;text-align:right;white-space:nowrap;-webkit-text-stroke:0.25px #000">0</div><div style="position:absolute;left:900px;top:786px;width:194px;height:42px;line-height:43px;font-size:26px;color:#000;text-align:right;white-space:nowrap;-webkit-text-stroke:0.25px #000">1</div><div style="position:absolute;left:1107.5px;top:786px;height:42px;line-height:43px;font-size:26px;color:#000;white-space:nowrap;-webkit-text-stroke:0.25px #000">no</div><div style="position:absolute;left:1309.5px;top:786px;height:42px;line-height:43px;font-size:26px;color:#000;white-space:nowrap;-webkit-text-stroke:0.25px #000">no</div><div style="position:absolute;left:92px;top:828px;width:194px;height:42px;line-height:43px;font-size:26px;color:#000;text-align:right;white-space:nowrap;-webkit-text-stroke:0.25px #000">10</div><div style="position:absolute;left:294px;top:828px;width:194px;height:42px;line-height:43px;font-size:26px;color:#000;text-align:right;white-space:nowrap;-webkit-text-stroke:0.25px #000">2</div><div style="position:absolute;left:496px;top:828px;width:194px;height:42px;line-height:43px;font-size:26px;color:#000;text-align:right;white-space:nowrap;-webkit-text-stroke:0.25px #000">1102</div><div style="position:absolute;left:698px;top:828px;width:194px;height:42px;line-height:43px;font-size:26px;color:#000;text-align:right;white-space:nowrap;-webkit-text-stroke:0.25px #000">0</div><div style="position:absolute;left:900px;top:828px;width:194px;height:42px;line-height:43px;font-size:26px;color:#000;text-align:right;white-space:nowrap;-webkit-text-stroke:0.25px #000">1</div><div style="position:absolute;left:1107.5px;top:828px;height:42px;line-height:43px;font-size:26px;color:#000;white-space:nowrap;-webkit-text-stroke:0.25px #000">no</div><div style="position:absolute;left:1309.5px;top:828px;height:42px;line-height:43px;font-size:26px;color:#000;white-space:nowrap;-webkit-text-stroke:0.25px #000">no</div><div style="position:absolute;left:92px;top:870px;width:194px;height:42px;line-height:43px;font-size:26px;color:#000;text-align:right;white-space:nowrap;-webkit-text-stroke:0.25px #000">11</div><div style="position:absolute;left:294px;top:870px;width:194px;height:42px;line-height:43px;font-size:26px;color:#000;text-align:right;white-space:nowrap;-webkit-text-stroke:0.25px #000">2</div><div style="position:absolute;left:496px;top:870px;width:194px;height:42px;line-height:43px;font-size:26px;color:#000;text-align:right;white-space:nowrap;-webkit-text-stroke:0.25px #000">1174</div><div style="position:absolute;left:698px;top:870px;width:194px;height:42px;line-height:43px;font-size:26px;color:#000;text-align:right;white-space:nowrap;-webkit-text-stroke:0.25px #000">1</div><div style="position:absolute;left:900px;top:870px;width:194px;height:42px;line-height:43px;font-size:26px;color:#000;text-align:right;white-space:nowrap;-webkit-text-stroke:0.25px #000">0</div><div style="position:absolute;left:1107.5px;top:870px;height:42px;line-height:43px;font-size:26px;color:#000;white-space:nowrap;-webkit-text-stroke:0.25px #000">yes</div><div style="position:absolute;left:1309.5px;top:870px;height:42px;line-height:43px;font-size:26px;color:#000;white-space:nowrap;-webkit-text-stroke:0.25px #000">yes</div><div style="position:absolute;left:92px;top:912px;width:194px;height:42px;line-height:43px;font-size:26px;color:#000;text-align:right;white-space:nowrap;-webkit-text-stroke:0.25px #000">12</div><div style="position:absolute;left:294px;top:912px;width:194px;height:42px;line-height:43px;font-size:26px;color:#000;text-align:right;white-space:nowrap;-webkit-text-stroke:0.25px #000">2</div><div style="position:absolute;left:496px;top:912px;width:194px;height:42px;line-height:43px;font-size:26px;color:#000;text-align:right;white-space:nowrap;-webkit-text-stroke:0.25px #000">1245</div><div style="position:absolute;left:698px;top:912px;width:194px;height:42px;line-height:43px;font-size:26px;color:#000;text-align:right;white-space:nowrap;-webkit-text-stroke:0.25px #000">1</div><div style="position:absolute;left:900px;top:912px;width:194px;height:42px;line-height:43px;font-size:26px;color:#000;text-align:right;white-space:nowrap;-webkit-text-stroke:0.25px #000">0</div><div style="position:absolute;left:1107.5px;top:912px;height:42px;line-height:43px;font-size:26px;color:#000;white-space:nowrap;-webkit-text-stroke:0.25px #000">no</div><div style="position:absolute;left:1309.5px;top:912px;height:42px;line-height:43px;font-size:26px;color:#000;white-space:nowrap;-webkit-text-stroke:0.25px #000">no</div><div style="position:absolute;left:92px;top:954px;width:194px;height:42px;line-height:43px;font-size:26px;color:#000;text-align:right;white-space:nowrap;-webkit-text-stroke:0.25px #000">13</div><div style="position:absolute;left:294px;top:954px;width:194px;height:42px;line-height:43px;font-size:26px;color:#000;text-align:right;white-space:nowrap;-webkit-text-stroke:0.25px #000">2</div><div style="position:absolute;left:496px;top:954px;width:194px;height:42px;line-height:43px;font-size:26px;color:#000;text-align:right;white-space:nowrap;-webkit-text-stroke:0.25px #000">1317</div><div style="position:absolute;left:698px;top:954px;width:194px;height:42px;line-height:43px;font-size:26px;color:#000;text-align:right;white-space:nowrap;-webkit-text-stroke:0.25px #000">0</div><div style="position:absolute;left:900px;top:954px;width:194px;height:42px;line-height:43px;font-size:26px;color:#000;text-align:right;white-space:nowrap;-webkit-text-stroke:0.25px #000">1</div><div style="position:absolute;left:1107.5px;top:954px;height:42px;line-height:43px;font-size:26px;color:#000;white-space:nowrap;-webkit-text-stroke:0.25px #000">yes</div><div style="position:absolute;left:1309.5px;top:954px;height:42px;line-height:43px;font-size:26px;color:#000;white-space:nowrap;-webkit-text-stroke:0.25px #000">yes</div><div style="position:absolute;left:92px;top:996px;width:194px;height:42px;line-height:43px;font-size:26px;color:#000;text-align:right;white-space:nowrap;-webkit-text-stroke:0.25px #000">14</div><div style="position:absolute;left:294px;top:996px;width:194px;height:42px;line-height:43px;font-size:26px;color:#000;text-align:right;white-space:nowrap;-webkit-text-stroke:0.25px #000">2</div><div style="position:absolute;left:496px;top:996px;width:194px;height:42px;line-height:43px;font-size:26px;color:#000;text-align:right;white-space:nowrap;-webkit-text-stroke:0.25px #000">1388</div><div style="position:absolute;left:698px;top:996px;width:194px;height:42px;line-height:43px;font-size:26px;color:#000;text-align:right;white-space:nowrap;-webkit-text-stroke:0.25px #000">0</div><div style="position:absolute;left:900px;top:996px;width:194px;height:42px;line-height:43px;font-size:26px;color:#000;text-align:right;white-space:nowrap;-webkit-text-stroke:0.25px #000">1</div><div style="position:absolute;left:1107.5px;top:996px;height:42px;line-height:43px;font-size:26px;color:#000;white-space:nowrap;-webkit-text-stroke:0.25px #000">yes</div><div style="position:absolute;left:1309.5px;top:996px;height:42px;line-height:43px;font-size:26px;color:#000;white-space:nowrap;-webkit-text-stroke:0.25px #000">no</div><div style="position:absolute;left:92px;top:1038px;width:194px;height:42px;line-height:43px;font-size:26px;color:#000;text-align:right;white-space:nowrap;-webkit-text-stroke:0.25px #000">15</div><div style="position:absolute;left:294px;top:1038px;width:194px;height:42px;line-height:43px;font-size:26px;color:#000;text-align:right;white-space:nowrap;-webkit-text-stroke:0.25px #000">2</div><div style="position:absolute;left:496px;top:1038px;width:194px;height:42px;line-height:43px;font-size:26px;color:#000;text-align:right;white-space:nowrap;-webkit-text-stroke:0.25px #000">1460</div><div style="position:absolute;left:698px;top:1038px;width:194px;height:42px;line-height:43px;font-size:26px;color:#000;text-align:right;white-space:nowrap;-webkit-text-stroke:0.25px #000">0</div><div style="position:absolute;left:900px;top:1038px;width:194px;height:42px;line-height:43px;font-size:26px;color:#000;text-align:right;white-space:nowrap;-webkit-text-stroke:0.25px #000">0</div><div style="position:absolute;left:1107.5px;top:1038px;height:42px;line-height:43px;font-size:26px;color:#000;white-space:nowrap;-webkit-text-stroke:0.25px #000">no</div><div style="position:absolute;left:1309.5px;top:1038px;height:42px;line-height:43px;font-size:26px;color:#000;white-space:nowrap;-webkit-text-stroke:0.25px #000">no</div><div style="position:absolute;left:92px;top:408px;width:2px;height:42px;background:#3574e0"></div><div style="position:absolute;left:92px;top:408px;width:202px;height:2px;background:#3574e0"></div><div style="position:absolute;left:290px;top:408px;width:4px;height:42px;background:#3574e0"></div><div style="position:absolute;left:92px;top:446px;width:202px;height:4px;background:#3574e0"></div><div style="position:absolute;left:284px;top:440px;width:15px;height:15px;background:#fff"></div><div style="position:absolute;left:286px;top:442px;width:12px;height:12px;background:#3574e0"></div><div style="position:absolute;left:0px;top:1318px;width:2058px;height:2px;background:#d4d4d4"></div><div style="position:absolute;left:0px;top:1320px;width:90px;height:22px;background:#f8f8f8"></div><div style="position:absolute;left:92px;top:1320px;width:1944px;height:22px;background:#fff"></div><div style="position:absolute;left:94px;top:1322px;width:686px;height:18px;background:#dadce0;border-radius:9px"></div><div style="position:absolute;left:1970px;top:1320px;width:64px;height:22px;background:#f8f8f8"></div><div style="position:absolute;left:1970px;top:1320px;width:2px;height:22px;background:#e3e3e3"></div><div style="position:absolute;left:2002px;top:1320px;width:2px;height:22px;background:#e3e3e3"></div><svg style="position:absolute;left:1981px;top:1326px;" width="8" height="11" viewBox="0 0 8 11"><polygon points="7,0 7,11 0,5.5" fill="#9e9e9e"/></svg><svg style="position:absolute;left:2016px;top:1326px;" width="8" height="11" viewBox="0 0 8 11"><polygon points="1,0 1,11 8,5.5" fill="#9e9e9e"/></svg><div style="position:absolute;left:2034px;top:360px;width:2px;height:982px;background:#e0e0e0"></div><div style="position:absolute;left:2036px;top:408px;width:22px;height:910px;background:#fff"></div><div style="position:absolute;left:2038px;top:410px;width:18px;height:52px;background:#dadce0;border-radius:9px"></div><div style="position:absolute;left:2036px;top:1255px;width:22px;height:63px;background:#f8f8f8"></div><div style="position:absolute;left:2036px;top:1254px;width:22px;height:2px;background:#e3e3e3"></div><div style="position:absolute;left:2036px;top:1286px;width:22px;height:2px;background:#e3e3e3"></div><svg style="position:absolute;left:2041px;top:1265px;" width="12" height="8" viewBox="0 0 12 8"><polygon points="0,7 11,7 5.5,0" fill="#9e9e9e"/></svg><svg style="position:absolute;left:2041px;top:1298px;" width="12" height="8" viewBox="0 0 12 8"><polygon points="0,0 11,0 5.5,7" fill="#9e9e9e"/></svg><div style="position:absolute;left:2036px;top:1320px;width:22px;height:22px;background:#f8f8f8"></div><div style="position:absolute;left:2034px;top:1320px;width:2px;height:22px;background:#e3e3e3"></div><div style="position:absolute;left:2058px;top:234px;width:2px;height:1188px;background:#dadce0"></div><div style="position:absolute;left:0px;top:1342px;width:2058px;height:2px;background:#dadce0"></div><div style="position:absolute;left:0px;top:1344px;width:2058px;height:78px;background:#f1f3f4"></div><svg style="position:absolute;left:98px;top:1366px;" width="24" height="24" viewBox="0 0 24 24"><g fill="#5f6368"><rect x="10" y="2" width="4.2" height="20"/><rect x="2" y="9.9" width="20" height="4.2"/></g></svg><svg style="position:absolute;left:160px;top:1367px;" width="25" height="24" viewBox="0 0 25 24"><g fill="#5f6368"><rect x="0" y="1" width="24.5" height="3.5"/><rect x="0" y="7.4" width="24.5" height="3.5"/><rect x="0" y="13.6" width="24.5" height="3.4"/><rect x="0" y="19.7" width="24.5" height="3.5"/></g></svg><div style="position:absolute;left:231px;top:1344px;width:2px;height:78px;background:#dadce0"></div><div style="position:absolute;left:265px;top:1365.65px;font-size:28px;line-height:32.20px;color:#5f6368;font-weight:400;white-space:nowrap;-webkit-text-stroke:1.1px #5f6368;letter-spacing:0.5px">Sheet1</div><svg style="position:absolute;left:375px;top:1377.5px;" width="16" height="8" viewBox="0 0 16 8"><polygon points="0,0 16,0 8.0,8" fill="#80868b"/></svg><div style="position:absolute;left:423px;top:1344px;width:2px;height:78px;background:#dadce0"></div><div style="position:absolute;left:456.5px;top:1365.65px;font-size:28px;line-height:32.20px;color:#5f6368;font-weight:400;white-space:nowrap;-webkit-text-stroke:1.1px #5f6368;letter-spacing:0.5px">Sheet2</div><svg style="position:absolute;left:570px;top:1377.5px;" width="16" height="8" viewBox="0 0 16 8"><polygon points="0,0 16,0 8.0,8" fill="#80868b"/></svg><div style="position:absolute;left:615px;top:1344px;width:4px;height:78px;background:linear-gradient(to right, rgba(0,0,0,0), rgba(0,0,0,0.06))"></div><div style="position:absolute;left:619px;top:1343px;width:194px;height:79px;background:#fff"></div><div style="position:absolute;left:813px;top:1344px;width:4px;height:78px;background:linear-gradient(to left, rgba(0,0,0,0), rgba(0,0,0,0.06))"></div><div style="position:absolute;left:651.5px;top:1365.65px;font-size:28px;line-height:32.20px;color:#3b7e41;font-weight:400;white-space:nowrap;-webkit-text-stroke:1.1px #3b7e41;letter-spacing:0.5px">Sheet3</div><svg style="position:absolute;left:765px;top:1377.5px;" width="16" height="8" viewBox="0 0 16 8"><polygon points="0,0 16,0 8.0,8" fill="#3b7e41"/></svg><div style="position:absolute;left:1848px;top:1344px;width:210px;height:78px;background:#fafafa"></div><div style="position:absolute;left:1848px;top:1345px;width:2px;height:77px;background:#c6c6c6"></div><svg style="position:absolute;left:1872px;top:1362px;" width="38" height="44" viewBox="0 0 38 44"><path d="M5 1 H32 a4 4 0 0 1 4 4 V33 a4 4 0 0 1 -4 4 H25 L19 43 L13 37 H5 a4 4 0 0 1 -4 -4 V5 a4 4 0 0 1 4 -4 Z" fill="#45995a"/><path d="M19.1 7.2 L22.2 13.4 Q23.1 15 24.8 15.8 L30.6 18.9 L24.8 22 Q23.1 22.8 22.2 24.4 L19.1 30.6 L16 24.4 Q15.1 22.8 13.4 22 L7.6 18.9 L13.4 15.8 Q15.1 15 16 13.4 Z" fill="#fff"/></svg><div style="position:absolute;left:1938px;top:1368.66px;font-size:25px;line-height:28.75px;color:#3d9a57;font-weight:400;white-space:nowrap;-webkit-text-stroke:0.15px #3d9a57;letter-spacing:-0.8px">Explore</div><svg style="position:absolute;left:2104px;top:1352px;" width="22" height="28" viewBox="0 0 22 28"><polyline points="6,4.5 15,14 6,23.5" fill="none" stroke="#5f6368" stroke-width="3.6"/></svg><svg style="position:absolute;left:2097px;top:271px;" width="37" height="38" viewBox="0 0 37 38">
<path d="M4 0 H28 V8 H8 V29 H0 V4 A4 4 0 0 1 4 0 Z" fill="#4f86ec"/>
<path d="M28 0 H33 A4 4 0 0 1 37 4 V8 H28 Z" fill="#2f62c9"/>
<rect x="28" y="8" width="9" height="21" fill="#f3be42"/>
<rect x="8" y="29" width="20" height="9" fill="#58a65c"/>
<path d="M0 29 H8 V38 H4 A4 4 0 0 1 0 34 Z" fill="#3a7d43"/>
<path d="M28 29 H37 L28 38 Z" fill="#e04b3a"/>
<rect x="8" y="8" width="20" height="21" fill="#fff"/>
</svg><div style="position:absolute;left:2107px;top:280.70px;font-size:18px;line-height:20.70px;color:#4f86ec;font-weight:400;white-space:nowrap;letter-spacing:-1.6px">31</div><div style="position:absolute;left:2097px;top:383px;width:38px;height:38px;background:#f1bc42;border-radius:5px"></div><div style="position:absolute;left:2108px;top:392px;width:16px;height:16px;border-radius:50%;background:#fff"></div><div style="position:absolute;left:2112px;top:409px;width:8px;height:4px;background:#fff"></div><svg style="position:absolute;left:2096px;top:494px;" width="40" height="40" viewBox="0 0 40 40"><circle cx="20" cy="20" r="14" fill="none" stroke="#4a86ec" stroke-width="5.5"/><path d="M11.5 19 L18.5 26 L34.5 10" fill="none" stroke="#4a86ec" stroke-width="5.5" stroke-linejoin="miter"/><path d="M28.5 16 L34.5 10 L31.5 7" fill="none" stroke="#2f63cc" stroke-width="5.5" opacity="0.7"/></svg><svg style="position:absolute;left:2100px;top:607px;" width="32" height="38" viewBox="0 0 32 38"><circle cx="16" cy="8.5" r="6.5" fill="#2457c9"/><path d="M2 35 V27 a9 9 0 0 1 9 -9 H21 a9 9 0 0 1 9 9 V35 Z" fill="#7fa3f2"/><path d="M7 35 V24 a6 6 0 0 1 6 -6 H19 a6 6 0 0 1 6 6 V35 Z" fill="#2457c9"/></svg><svg style="position:absolute;left:2103px;top:720px;" width="27" height="36" viewBox="0 0 27 36">
<defs><clipPath id="pin"><path d="M13.5 0.5 C20.5 0.5 25.5 6 25.5 12.5 C25.5 21 16 26 13.5 35 C11 26 1.5 21 1.5 12.5 C1.5 6 6.5 0.5 13.5 0.5 Z"/></clipPath></defs>
<g clip-path="url(#pin)">
<rect x="0" y="0" width="27" height="36" fill="#58a65c"/>
<path d="M0 0 H27 V12 L4 12 Z" fill="#4a86ec"/>
<path d="M0 0 L13 13 L0 22 Z" fill="#de4b3d"/>
<path d="M0 22 L13 13 L20 13 L5 32 Z" fill="#f3be42"/>
<path d="M27 0 V8 L21 14 L13 13 Z" fill="#5a8ff0"/>
</g>
<circle cx="13.5" cy="12.8" r="4.5" fill="#fff"/>
</svg><div style="position:absolute;left:2095px;top:827px;width:40px;height:2px;background:#dadce0"></div><svg style="position:absolute;left:2101px;top:901px;" width="30" height="30" viewBox="0 0 30 30"><g fill="#202124"><rect x="13.5" y="2" width="3" height="27"/><rect x="1.5" y="14" width="27" height="3"/></g></svg><div style="position:absolute;left:0;top:0;width:18px;height:18px;background:radial-gradient(circle at 18px 18px, rgba(0,0,0,0) 17.5px, #000 18.5px)"></div><div style="position:absolute;right:0;top:0;width:18px;height:18px;background:radial-gradient(circle at 0 18px, rgba(0,0,0,0) 17.5px, #000 18.5px)"></div><div style="position:absolute;left:0;bottom:0;width:18px;height:18px;background:radial-gradient(circle at 18px 0, rgba(0,0,0,0) 17.5px, #000 18.5px)"></div><div style="position:absolute;right:0;bottom:0;width:18px;height:18px;background:radial-gradient(circle at 0 0, rgba(0,0,0,0) 17.5px, #000 18.5px)"></div>
</body></html>
